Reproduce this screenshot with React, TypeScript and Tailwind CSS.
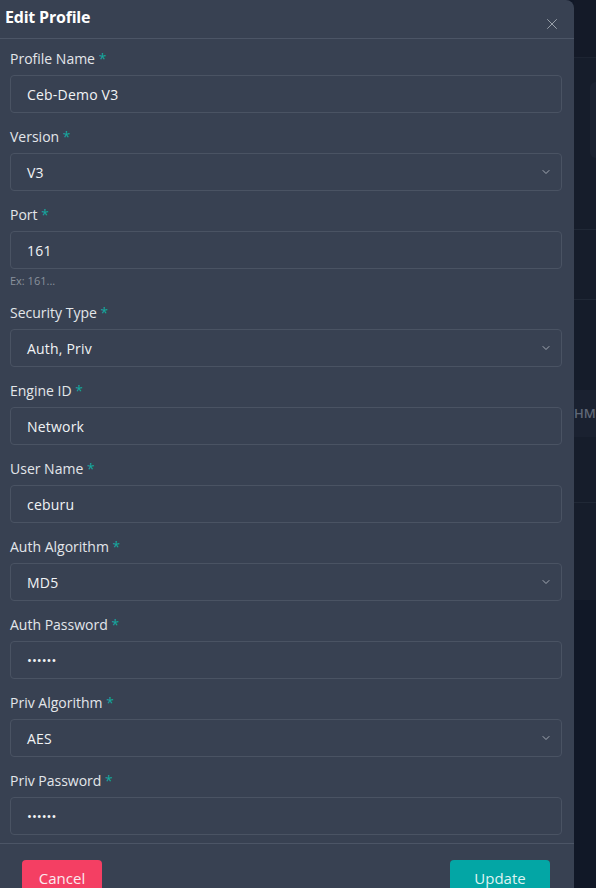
import { X, ChevronDown } from "lucide-react";

type Field = {
  label: string;
  value: string;
  kind: "text" | "select" | "password";
  hint?: string;
};

const fields: Field[] = [
  { label: "Profile Name", value: "Ceb-Demo V3", kind: "text" },
  { label: "Version", value: "V3", kind: "select" },
  { label: "Port", value: "161", kind: "text", hint: "Ex: 161..." },
  { label: "Security Type", value: "Auth, Priv", kind: "select" },
  { label: "Engine ID", value: "Network", kind: "text" },
  { label: "User Name", value: "ceburu", kind: "text" },
  { label: "Auth Algorithm", value: "MD5", kind: "select" },
  { label: "Auth Password", value: "••••••", kind: "password" },
  { label: "Priv Algorithm", value: "AES", kind: "select" },
  { label: "Priv Password", value: "••••••", kind: "password" },
];

const boxClass =
  "h-[38px] w-full rounded-[4px] border border-[#4a5363] bg-[#384152] pl-4 pr-[9px] flex items-center text-[14px] font-medium tracking-[0.2px] text-[#f1f3f5]";

function FormField({ f }: { f: Field }) {
  return (
    <div className="mb-[14px]">
      <label className="block h-5 leading-5 text-[14px] font-medium text-[#e3e6ea]">
        {f.label} <span className="text-[#14a8a0]">*</span>
      </label>
      <div className={`mt-[6px] ${boxClass}`}>
        {f.kind === "password" ? (
          <span className="text-[13px] leading-none tracking-normal">{f.value}</span>
        ) : (
          <span className="flex-1">{f.value}</span>
        )}
        {f.kind === "select" && (
          <ChevronDown className="ml-auto w-[12px] h-[12px] text-[#a3a9b3]" strokeWidth={2} />
        )}
      </div>
      {f.hint && (
        <p className="mt-[4px] h-4 leading-4 text-[11px] text-[#8a919c]">{f.hint}</p>
      )}
    </div>
  );
}

export default function App() {
  return (
    <div
      className="flex w-[596px] h-[888px] overflow-hidden bg-[#111827]"
      style={{ fontFamily: "'Open Sans', 'Noto Sans', sans-serif" }}
    >
      <div className="w-[574px] shrink-0 h-full bg-[#384152] rounded-tr-[8px] flex flex-col">
        <div className="h-[39px] shrink-0 border-b border-[#4c5566] flex items-start justify-between pl-[5px] pr-[13px]">
          <h2 className="mt-[6px] text-[16px] font-bold text-white leading-[22px] tracking-[-0.2px]">
            Edit Profile
          </h2>
          <X className="mt-[15px] w-[18px] h-[18px] text-[#9aa1ab]" strokeWidth={1.3} />
        </div>
        <div className="pt-[10px] pl-[10px] pr-[12px] pb-0">
          {fields.map((f) => (
            <FormField key={f.label} f={f} />
          ))}
        </div>
        <div className="-mt-[6px] border-t border-[#4c5566] pt-[16px] pl-[22px] pr-[24px] flex justify-between">
          <button className="h-[36px] w-[80px] rounded-[4px] bg-[#f43f63] text-[15px] text-[#fbe9ee]">
            Cancel
          </button>
          <button className="h-[36px] w-[100px] rounded-[4px] bg-[#03a6a5] text-[15px] text-[#def3f1]">
            Update
          </button>
        </div>
      </div>
      <div className="flex-1 flex flex-col">
        <div className="h-[58px] bg-[#141a28] border-b border-[#1d2432]" />
        <div className="h-[172px] bg-[#161d2b] border-b border-[#202836] pt-[24px] pl-[16px]">
          <div className="h-[76px] rounded-l-[6px] bg-[#1b2231]" />
        </div>
        <div className="h-[70px] bg-[#161d2b] border-b border-[#202836]" />
        <div className="h-[90px] bg-[#151c2a]" />
        <div className="h-[47px] bg-[#1a2130] flex items-center text-[13px] text-[#5f6776] font-semibold">
          HM
        </div>
        <div className="h-[66px] bg-[#161d2b] border-b border-[#202836]" />
        <div className="h-[97px] bg-[#161d2b]" />
        <div className="flex-1 bg-[#111827]" />
      </div>
    </div>
  );
}
